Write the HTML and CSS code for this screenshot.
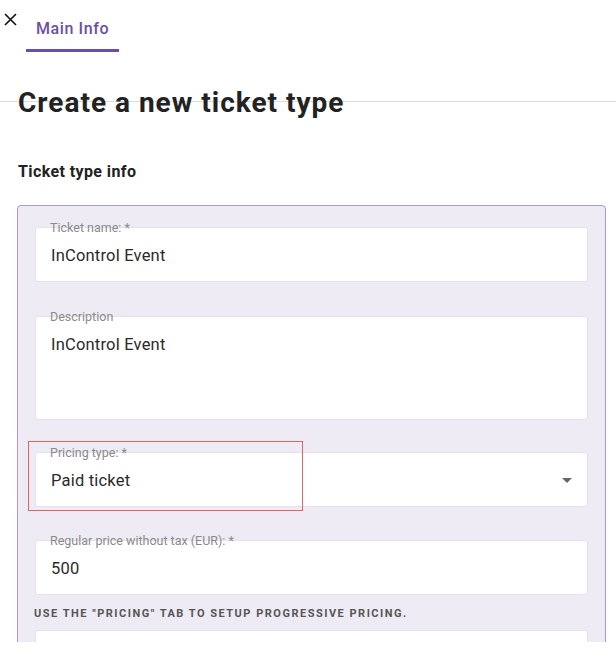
FILE: index.html
```html
<!DOCTYPE html>
<html lang="en">
<head>
  <meta charset="UTF-8">
  <title>Create a new ticket type</title>
  <link rel="stylesheet" href="styles.css">
</head>
<body>

<div class="page">

  <!-- tabs -->
  <div class="topbar">
    <button class="close-btn" aria-label="Close">
      <svg width="13" height="13" viewBox="0 0 13 13">
        <path d="M1 1 L12 12 M12 1 L1 12" stroke="#111" stroke-width="1.6" fill="none"/>
      </svg>
    </button>
    <div class="tab active">Main Info</div>
  </div>

  <h1 class="title">Create a new ticket type</h1>

  <h2 class="section-title">Ticket type info</h2>

  <div class="panel">
    <div class="field">
      <span class="field-label">Ticket name: *</span>
      <div class="field-value">InControl Event</div>
    </div>

    <div class="field field-area">
      <span class="field-label">Description</span>
      <div class="field-value">InControl Event</div>
    </div>

    <div class="field field-select">
      <span class="field-label">Pricing type: *</span>
      <div class="field-value">Paid ticket</div>
      <span class="caret"></span>
      <div class="highlight"></div>
    </div>

    <div class="field">
      <span class="field-label">Regular price without tax (EUR): *</span>
      <div class="field-value">500</div>
    </div>

    <p class="hint">Use the "Pricing" tab to setup progressive pricing.</p>

    <div class="field"></div>
  </div>

</div>

</body>
</html>
```

FILE: styles.css
```css
body {
  margin: 0;
  background: #fff;
  font-family: Roboto, "Noto Sans", sans-serif;
  color: #222;
}
.page {
  height: 642px;
  overflow: hidden;
}
.topbar {
  display: flex;
  align-items: flex-start;
  padding-left: 4px;
  border-bottom: 1px solid #dcdcdc;
  box-sizing: border-box;
  height: 102px;
}
.close-btn {
  border: 0;
  background: none;
  padding: 0;
  margin-top: 13px;
  width: 13px;
  height: 13px;
  line-height: 0;
  cursor: pointer;
}
.tab {
  margin-left: 9px;
  padding: 17px 10px 8px;
  line-height: 24px;
  font-size: 16px;
  font-weight: 500;
  letter-spacing: 0.6px;
  color: #6a4fa3;
  border-bottom: 3px solid #6a4fa8;
}
.title {
  position: relative;
  margin: -16px 0 0 18px;
  font-size: 28px;
  line-height: 34px;
  font-weight: bold;
  letter-spacing: 1px;
  color: #222;
}
.section-title {
  margin: 42px 0 0 18px;
  font-size: 16px;
  line-height: 20px;
  font-weight: bold;
  letter-spacing: 0.4px;
  color: #222;
}
.panel {
  margin: 23px 0 0 17px;
  width: 589px;
  box-sizing: border-box;
  padding: 21px 17px 20px;
  background: #efebf4;
  border: 1px solid #ad98d3;
  border-radius: 4px;
  display: flex;
  flex-direction: column;
}
.field {
  position: relative;
  height: 55px;
  box-sizing: border-box;
  padding: 18px 15px 0;
  background: #fff;
  border: 1px solid #e6e2ec;
  border-radius: 3px;
  margin-bottom: 34px;
}
.field-area {
  height: 104px;
  margin-bottom: 32px;
}
.field-select {
  margin-bottom: 33px;
}
.field-label {
  position: absolute;
  left: 14px;
  top: -7px;
  font-size: 12.5px;
  line-height: 14px;
  color: #8a8a8a;
}
.field-value {
  font-size: 16.5px;
  line-height: 20px;
  letter-spacing: 0.2px;
  color: #2a2a2a;
}
.caret {
  position: absolute;
  right: 15px;
  top: 25px;
  border-left: 5px solid transparent;
  border-right: 5px solid transparent;
  border-top: 5px solid #666;
}
.highlight {
  position: absolute;
  left: -8px;
  top: -12px;
  width: 275px;
  height: 70px;
  box-sizing: border-box;
  border: 1px solid #e36262;
}
.hint {
  margin: -22px 0 9px -1px;
  font-size: 11px;
  line-height: 14px;
  font-weight: bold;
  letter-spacing: 1.5px;
  text-transform: uppercase;
  color: #555;
}
```
